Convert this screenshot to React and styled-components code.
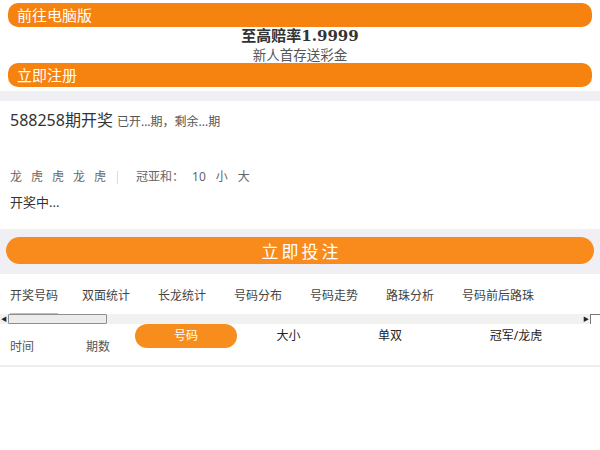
import React from "react";
import styled, { createGlobalStyle } from "styled-components";

const GlobalStyle = createGlobalStyle`
  body {
    margin: 0;
    background: #ffffff;
    font-family: "Noto Sans", "Noto Sans CJK SC", sans-serif;
    color: #333;
  }
`;

const Page = styled.div`
  width: 600px;
  background: #fff;
`;

const Promo = styled.div`
  padding: 3px 8px 4px;
  display: flex;
  flex-direction: column;
`;

const OrangeBar = styled.div`
  height: 24px;
  border-radius: 10px;
  background: #f6820f;
  color: #fff;
  font-size: 15px;
  line-height: 24px;
  padding-left: 9px;
  font-family: "Noto Sans CJK SC", sans-serif;
`;

const Headline = styled.div`
  text-align: center;
  font-family: "DejaVu Serif", "Noto Sans CJK SC", serif;
  font-weight: bold;
  font-size: 15px;
  line-height: 19px;
  color: #333;
`;

const SubLine = styled.div`
  text-align: center;
  font-family: "Noto Sans CJK SC", sans-serif;
  font-size: 13.5px;
  line-height: 17px;
  color: #555;
`;

const GrayBand = styled.div`
  background: #efeff4;
  padding: ${(p) => p.$pad || "0"};
  height: ${(p) => (p.$h ? `${p.$h}px` : "auto")};
`;

const DrawSection = styled.div`
  padding: 9px 10px 17px;
`;

const DrawTitle = styled.div`
  font-size: 16px;
  line-height: 20px;
  color: #333;
  display: flex;
  align-items: baseline;
  gap: 4px;
`;

const DrawNote = styled.span`
  font-size: 12px;
  color: #555;
`;

const ResultRow = styled.div`
  margin-top: 36px;
  font-size: 12px;
  line-height: 18px;
  color: #666;
  display: flex;
  align-items: center;
`;

const ResultItem = styled.span`
  margin-right: ${(p) => p.$gap || 9}px;
`;

const Divider = styled.span`
  width: 1px;
  height: 13px;
  background: #ddd;
  margin: 0 18px 0 2px;
`;

const Status = styled.div`
  margin-top: 6px;
  font-size: 13px;
  line-height: 20px;
  color: #333;
`;

const BetButton = styled.div`
  height: 27px;
  border-radius: 14px;
  background: #f88b1c;
  color: #fff;
  font-size: 17px;
  letter-spacing: 3px;
  text-indent: 3px;
  line-height: 27px;
  text-align: center;
  font-family: "Noto Sans CJK SC", sans-serif;
`;

const TabRow = styled.div`
  height: 40px;
  display: flex;
  align-items: flex-start;
  padding-left: 10px;
  gap: 28px;
`;

const Tab = styled.div`
  font-size: 12px;
  line-height: 17px;
  color: #444;
  padding-top: 13px;
  height: 26px;
  white-space: nowrap;
  border-bottom: 2px solid ${(p) => (p.$active ? "#f7b46a" : "transparent")};
  margin-right: ${(p) => (p.$active ? "-4px" : "0")};
`;

const Scrollbar = styled.div`
  height: 10px;
  display: flex;
  align-items: stretch;
  background: #f1f1ef;
  margin-right: 10px;
  position: relative;
`;

const ArrowBox = styled.div`
  width: 8px;
  display: flex;
  align-items: center;
  justify-content: center;
  font-size: 6px;
  color: #222;
  line-height: 1;
`;

const Thumb = styled.div`
  width: 99px;
  border: 1px solid #8e8e8e;
  border-radius: 1px;
  background: #ececea;
  box-sizing: border-box;
`;

const Track = styled.div`
  flex: 1;
`;

const Corner = styled.div`
  position: absolute;
  right: -10px;
  top: 0;
  width: 10px;
  height: 10px;
  border-top: 1px solid #777;
  border-left: 1px solid #777;
  box-sizing: border-box;
`;

const HeaderRow = styled.div`
  display: flex;
  height: 41px;
  padding-left: 10px;
  border-bottom: 2px solid #eeeeee;
`;

const LowCell = styled.div`
  width: ${(p) => p.$w}px;
  font-size: 12px;
  color: #555;
  align-self: flex-end;
  padding-bottom: 10px;
  line-height: 17px;
`;

const Pill = styled.div`
  width: 102px;
  height: 24px;
  border-radius: 12px;
  background: #f78d1d;
  color: #fff;
  font-size: 12px;
  line-height: 24px;
  text-align: center;
`;

const TopCell = styled.div`
  width: ${(p) => p.$w}px;
  font-size: 12px;
  line-height: 24px;
  color: #222;
  text-align: center;
`;

const tabs = ["开奖号码", "双面统计", "长龙统计", "号码分布", "号码走势", "路珠分析", "号码前后路珠"];
const results = ["龙", "虎", "虎", "龙", "虎"];

export default function App() {
  return (
    <Page>
      <GlobalStyle />
      <Promo>
        <OrangeBar>前往电脑版</OrangeBar>
        <Headline>至高赔率1.9999</Headline>
        <SubLine>新人首存送彩金</SubLine>
        <OrangeBar>立即注册</OrangeBar>
      </Promo>
      <GrayBand $h={10} />
      <DrawSection>
        <DrawTitle>
          588258期开奖<DrawNote>已开...期，剩余...期</DrawNote>
        </DrawTitle>
        <ResultRow>
          {results.map((r, i) => (
            <ResultItem key={i}>{r}</ResultItem>
          ))}
          <Divider />
          <ResultItem $gap={8}>冠亚和：</ResultItem>
          <ResultItem $gap={10}>10</ResultItem>
          <ResultItem $gap={10}>小</ResultItem>
          <ResultItem>大</ResultItem>
        </ResultRow>
        <Status>开奖中...</Status>
      </DrawSection>
      <GrayBand $pad="8px 6px 10px">
        <BetButton>立即投注</BetButton>
      </GrayBand>
      <TabRow>
        {tabs.map((t, i) => (
          <Tab key={t} $active={i === 0}>
            {t}
          </Tab>
        ))}
      </TabRow>
      <Scrollbar>
        <ArrowBox>◀</ArrowBox>
        <Thumb />
        <Track />
        <ArrowBox>▶</ArrowBox>
        <Corner />
      </Scrollbar>
      <HeaderRow>
        <LowCell $w={76}>时间</LowCell>
        <LowCell $w={49}>期数</LowCell>
        <Pill>号码</Pill>
        <TopCell $w={103}>大小</TopCell>
        <TopCell $w={100}>单双</TopCell>
        <TopCell $w={152}>冠军/龙虎</TopCell>
      </HeaderRow>
    </Page>
  );
}
